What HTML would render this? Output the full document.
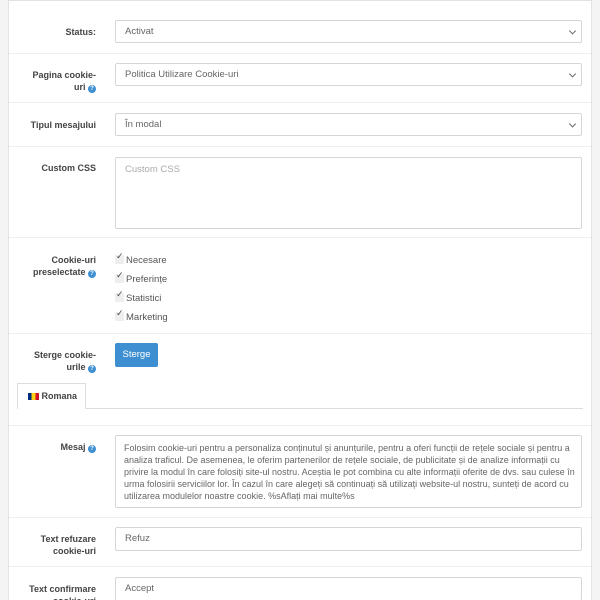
<!DOCTYPE html>
<html><head><style>
*{box-sizing:border-box;margin:0;padding:0}
html,body{width:600px;height:600px;overflow:hidden}
body{background:#f4f4f4;font-family:"Liberation Sans",sans-serif;font-size:9px;color:#555;position:relative}
.panel{position:absolute;left:8px;top:0;width:584px;height:600px;background:#fff;border:1px solid #e3e3e3;border-bottom:none}
.a{position:absolute}
.lbl{position:absolute;right:504px;width:90px;text-align:right;font-weight:bold;color:#444;font-size:9px;line-height:12px}
.sep{position:absolute;left:9px;width:582px;height:1px;background:#eee}
.inp{position:absolute;left:115px;width:467px;border:1px solid #d6d6d6;border-radius:2px;background:#fff;padding:0 9px;color:#666;font-size:9.5px}
.one{display:flex;align-items:center;line-height:12px}
.sel:after{content:"";position:absolute;right:6px;top:50%;width:4px;height:4px;border-right:1.3px solid #666;border-bottom:1.3px solid #666;transform:translateY(-70%) rotate(45deg)}
.q{display:inline-block;width:8px;height:8px;border-radius:50%;background:#3d8fd1;color:#fff;font-size:6px;line-height:8px;text-align:center;vertical-align:0px}
.cb{position:absolute;left:115px;font-size:9.5px;color:#555}
.cb i{display:inline-block;width:9px;height:9px;background:#eee;border-radius:1px;position:relative;margin-right:2px;vertical-align:-1px}
.cb i:after{content:"✓";position:absolute;left:1px;top:-4px;font-style:normal;font-size:9px;color:#444}
</style></head><body>
<div class="panel"></div>
<div class="lbl" style="top:26px">Status:</div>
<div class="inp sel one" style="top:20px;height:23px">Activat</div>
<div class="sep" style="top:53px"></div>
<div class="lbl" style="top:69px">Pagina cookie-<br>uri <span class="q">?</span></div>
<div class="inp sel one" style="top:63px;height:23px">Politica Utilizare Cookie-uri</div>
<div class="sep" style="top:102px"></div>
<div class="lbl" style="top:119px">Tipul mesajului</div>
<div class="inp sel one" style="top:113px;height:23px">În modal</div>
<div class="sep" style="top:146px"></div>
<div class="lbl" style="top:162px">Custom CSS</div>
<div class="inp" style="top:157px;height:72px;padding-top:6px;color:#aaa">Custom CSS</div>
<div class="sep" style="top:237px"></div>
<div class="lbl" style="top:254px">Cookie-uri<br>preselectate <span class="q">?</span></div>
<div class="cb" style="top:255px"><i></i>Necesare</div>
<div class="cb" style="top:274px"><i></i>Preferințe</div>
<div class="cb" style="top:293px"><i></i>Statistici</div>
<div class="cb" style="top:312px"><i></i>Marketing</div>
<div class="sep" style="top:333px"></div>
<div class="lbl" style="top:349px">Sterge cookie-<br>urile <span class="q">?</span></div>
<div class="a" style="left:115px;top:343px;width:43px;height:24px;background:#3d8fd1;border-radius:2px;color:#fff;text-align:center;line-height:23px;font-size:9.5px">Sterge</div>
<div class="a" style="left:17px;top:383px;width:69px;height:26px;border:1px solid #ddd;border-bottom:none;background:#fff;font-weight:bold;color:#444;padding:7px 0 0 10px"><span style="display:inline-block;width:11px;height:7px;background:linear-gradient(90deg,#002b7f 33%,#fcd116 33% 66%,#ce1126 66%);vertical-align:-1px"></span> Romana</div>
<div class="a" style="left:86px;top:408px;width:497px;height:1px;background:#ddd"></div>
<div class="sep" style="top:425px"></div>
<div class="lbl" style="top:441px">Mesaj <span class="q">?</span></div>
<div class="inp" style="top:435px;height:73px;padding:6px 8px;line-height:12px;color:#666;font-size:9px;white-space:nowrap;overflow:hidden">Folosim cookie-uri pentru a personaliza conținutul și anunțurile, pentru a oferi funcții de rețele sociale și pentru a<br>analiza traficul. De asemenea, le oferim partenerilor de rețele sociale, de publicitate și de analize informații cu<br>privire la modul în care folosiți site-ul nostru. Aceștia le pot combina cu alte informații oferite de dvs. sau culese în<br>urma folosirii serviciilor lor. În cazul în care alegeți să continuați să utilizați website-ul nostru, sunteți de acord cu<br>utilizarea modulelor noastre cookie. %sAflați mai multe%s</div>
<div class="sep" style="top:517px"></div>
<div class="lbl" style="top:533px">Text refuzare<br>cookie-uri</div>
<div class="inp one" style="top:527px;height:24px">Refuz</div>
<div class="sep" style="top:566px"></div>
<div class="lbl" style="top:583px">Text confirmare<br>cookie-uri</div>
<div class="inp one" style="top:577px;height:24px">Accept</div>
</body></html>
